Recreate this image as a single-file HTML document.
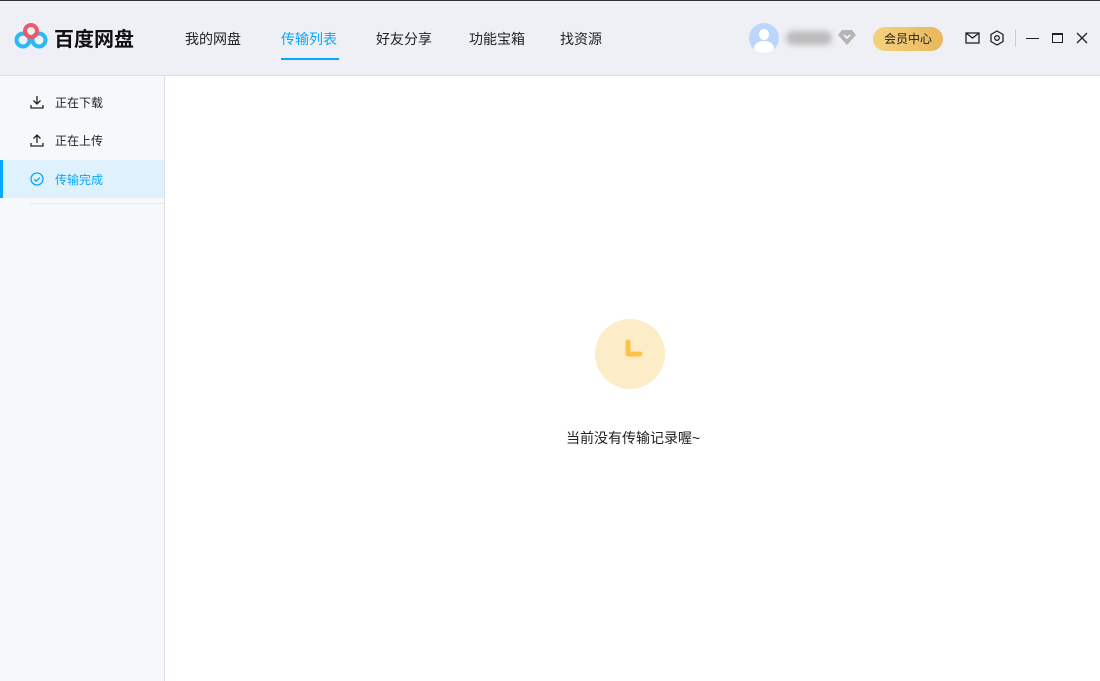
<!DOCTYPE html>
<html><head><meta charset="utf-8"><style>
*{margin:0;padding:0;box-sizing:border-box}
body{width:1100px;height:681px;overflow:hidden;font-family:"Liberation Sans","Noto Sans CJK SC",sans-serif;background:#fff;position:relative}
.top{position:absolute;left:0;top:0;width:1100px;height:76px;background:#eef0f5;border-top:1px solid #333;border-bottom:1px solid #dcdfe6}
.logo{position:absolute;left:54px;top:22px;font-size:20px;font-weight:bold;color:#111}
.nav{position:absolute;top:28px;font-size:14px;color:#222}
.nav.on{color:#06a7ff}
.ul{position:absolute;left:281px;top:57px;width:58px;height:2px;background:#06a7ff}
.side{position:absolute;left:0;top:76px;width:165px;height:605px;background:#f7f8fa;border-right:1px solid #dcdfe6}
.item{position:absolute;left:0;width:164px;height:38px;font-size:12px;color:#222}
.item span{position:absolute;left:55px;top:11px}
.item svg{position:absolute;left:30px;top:12px}
.sel{background:#dff1fc;color:#06a7ff;border-left:3px solid #06a7ff}
.sel svg{left:27px}.sel span{left:52px}
</style></head><body>
<div class="top">
<svg style="position:absolute;left:14px;top:21px" width="34" height="28" viewBox="0 0 34 28">
<circle cx="9" cy="18" r="6.5" fill="none" stroke="#2bb8f5" stroke-width="4"/>
<circle cx="25" cy="18" r="6.5" fill="none" stroke="#2bb8f5" stroke-width="4"/>
<circle cx="17" cy="9" r="6" fill="none" stroke="#f2566b" stroke-width="4"/>
</svg>
<div class="logo">百度网盘</div>
<div class="nav" style="left:185px">我的网盘</div>
<div class="nav on" style="left:281px">传输列表</div>
<div class="nav" style="left:376px">好友分享</div>
<div class="nav" style="left:469px">功能宝箱</div>
<div class="nav" style="left:560px">找资源</div>
<div class="ul"></div>
<div style="position:absolute;left:749px;top:22px;width:30px;height:30px;border-radius:50%;background:#bcd6fc;overflow:hidden">
<div style="position:absolute;left:10px;top:6px;width:10px;height:11px;border-radius:50%;background:#fff"></div>
<div style="position:absolute;left:5px;top:18px;width:20px;height:14px;border-radius:50%;background:#fff"></div></div>
<div style="position:absolute;left:786px;top:30px;width:46px;height:14px;border-radius:7px;background:#bbb;filter:blur(3px)"></div>
<svg style="position:absolute;left:838px;top:29px" width="18" height="15" viewBox="0 0 18 15"><path d="M4 0h10l4 5-9 10-9-10z" fill="#b5b5b5"/><path d="M6 5l3 3 3-3" stroke="#fff" stroke-width="1.5" fill="none"/></svg>
<div style="position:absolute;left:873px;top:26px;width:70px;height:24px;border-radius:12px;background:linear-gradient(90deg,#f5d27e,#e9b75d);font-size:12px;color:#222;text-align:center;line-height:24px">会员中心</div>
<svg style="position:absolute;left:965px;top:31px" width="15" height="12" viewBox="0 0 15 12"><rect x="1" y="1" width="13" height="10" fill="none" stroke="#222" stroke-width="1.3"/><path d="M1 1l6.5 5 6.5-5" fill="none" stroke="#222" stroke-width="1.3"/></svg>
<svg style="position:absolute;left:990px;top:29px" width="14" height="16" viewBox="0 0 14 16"><path d="M7 1l6 3.5v7L7 15 1 11.5v-7z" fill="none" stroke="#222" stroke-width="1.3"/><circle cx="7" cy="8" r="2.3" fill="none" stroke="#222" stroke-width="1.3"/></svg>
<div style="position:absolute;left:1015px;top:29px;width:1px;height:17px;background:#ccc"></div>
<div style="position:absolute;left:1026px;top:37px;width:13px;height:1.3px;background:#222"></div>
<div style="position:absolute;left:1052px;top:32px;width:11px;height:10px;border:1.3px solid #222;border-top-width:2.5px"></div>
<svg style="position:absolute;left:1076px;top:31px" width="12" height="12" viewBox="0 0 12 12"><path d="M1 1l10 10M11 1L1 11" stroke="#222" stroke-width="1.3"/></svg>
</div>
<div class="side">
<div class="item" style="top:7px"><svg width="14" height="14" viewBox="0 0 14 14"><path d="M7 1v8M3.5 5.5L7 9l3.5-3.5M1 10v3h12v-3" fill="none" stroke="#222" stroke-width="1.3"/></svg><span>正在下载</span></div>
<div class="item" style="top:45px"><svg width="14" height="14" viewBox="0 0 14 14"><path d="M7 10V2M3.5 5.5L7 2l3.5 3.5M1 10v3h12v-3" fill="none" stroke="#222" stroke-width="1.3"/></svg><span>正在上传</span></div>
<div class="item sel" style="top:84px"><svg width="14" height="14" viewBox="0 0 14 14"><circle cx="7" cy="7" r="6" fill="none" stroke="#06a7ff" stroke-width="1.3"/><path d="M4.2 7.2l2 2 3.6-3.6" fill="none" stroke="#06a7ff" stroke-width="1.3"/></svg><span>传输完成</span></div>
<div style="position:absolute;left:30px;top:127px;width:134px;height:1px;background:#e5e7eb"></div>
</div>
<div style="position:absolute;left:595px;top:319px;width:70px;height:70px;border-radius:50%;background:#fdecc8"></div>
<svg style="position:absolute;left:595px;top:319px" width="70" height="70" viewBox="0 0 70 70"><path d="M33 23v12h12" fill="none" stroke="#fec345" stroke-width="5" stroke-linecap="round" stroke-linejoin="round"/></svg>
<div style="position:absolute;left:566px;top:428px;font-size:14px;color:#222">当前没有传输记录喔~</div>
</body></html>
